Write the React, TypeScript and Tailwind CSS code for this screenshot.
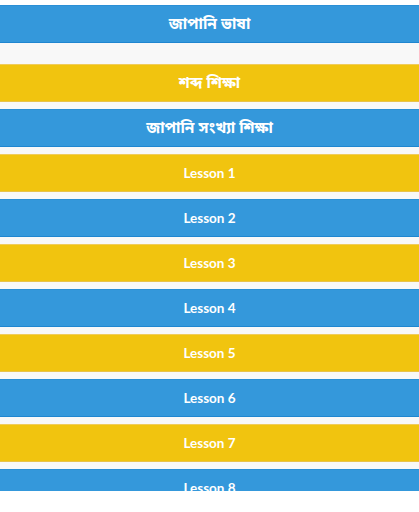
import React from "react";

type Tone = "blue" | "yellow";

const toneClass: Record<Tone, string> = {
  blue: "bg-[#3498db] border-t-[#2a8fd6] border-b-[#1f86d0]",
  yellow: "bg-[#f1c40f] border-t-[#f0cc5a] border-b-[#e9c34a]",
};

const MenuButton: React.FC<{ tone: Tone; bangla?: boolean; children: React.ReactNode }> = ({
  tone,
  bangla,
  children,
}) => (
  <button
    className={`flex h-[38px] w-full shrink-0 items-center justify-center border-y text-white ${toneClass[tone]} ${
      bangla
        ? "pt-[3px] font-['Noto_Sans_Bengali','Lohit_Bengali','Noto_Sans',sans-serif] text-[15.5px] font-bold"
        : "pt-px font-['Lato',sans-serif] text-[13.5px] font-bold"
    }`}
  >
    {children}
  </button>
);

const lessons = [1, 2, 3, 4, 5, 6, 7, 8];

export default function App() {
  return (
    <div className="h-[512px] w-[419px] bg-white">
      <div className="flex h-[491px] flex-col overflow-hidden bg-[#f8f8f8]">
        <div className="bg-white pt-[5px]">
          <MenuButton tone="blue" bangla>
            জাপানি ভাষা
          </MenuButton>
        </div>
        <div className="mt-[21px] flex flex-col gap-[7px]">
          <MenuButton tone="yellow" bangla>
            শব্দ শিক্ষা
          </MenuButton>
          <MenuButton tone="blue" bangla>
            জাপানি সংখ্যা শিক্ষা
          </MenuButton>
          {lessons.map((n) => (
            <MenuButton key={n} tone={n % 2 === 1 ? "yellow" : "blue"}>
              Lesson {n}
            </MenuButton>
          ))}
        </div>
      </div>
    </div>
  );
}
